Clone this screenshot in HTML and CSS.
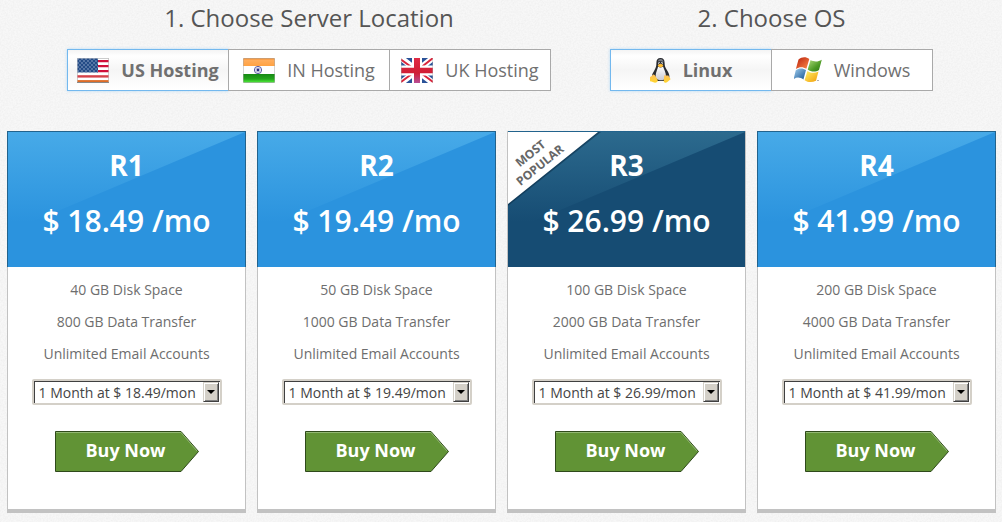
FILE: index.html
```html
<!DOCTYPE html>
<html lang="en">
<head>
<meta charset="utf-8">
<meta name="viewport" content="width=device-width, initial-scale=1">
<title>Hosting Plans</title>
<link rel="stylesheet" href="styles.css">
</head>
<body>
<main>
  <div class="pickers">
    <section class="picker">
      <h2 class="picker-title">1. Choose Server Location</h2>
      <div class="options">
        <button type="button" class="option selected" aria-pressed="true">
          <svg class="icon" viewBox="0 0 32 25" aria-hidden="true">
            <defs>
              <pattern id="stars" width="4" height="4" patternUnits="userSpaceOnUse"><rect width="4" height="4" fill="#234b86"/><circle cx="1" cy="1" r=".65" fill="#b4c6e0"/><circle cx="3" cy="3" r=".65" fill="#b4c6e0"/></pattern>
            </defs>
            <rect width="32" height="25" rx="1" fill="#999"/>
            <rect x="0.5" y="0.5" width="31" height="24" fill="#fff"/>
            <path d="M20 3.200h11.500M20 8.200h11.500M20 13.200h11.500" stroke="#d0103a" stroke-width="2.200"/>
            <path d="M.5 18.400h31" stroke="#d5424a" stroke-width="2.400"/>
            <path d="M.5 23.200h31" stroke="#dd6c28" stroke-width="2.200"/>
            <rect x="0.5" y="0.5" width="20.500" height="14" fill="url(#stars)"/>
            <path d="M0 24.500h32" stroke="#888" stroke-width="1"/>
          </svg>
          <span>US Hosting</span>
        </button>
        <button type="button" class="option" aria-pressed="false">
          <svg class="icon" viewBox="0 0 32 25" aria-hidden="true">
            <defs>
              <linearGradient id="saffron" x2="0" y2="1"><stop stop-color="#f58f31"/><stop offset=".25" stop-color="#ffad5c"/><stop offset="1" stop-color="#ffa243"/></linearGradient>
              <linearGradient id="green" x2="0" y2="1"><stop stop-color="#168a14"/><stop offset=".6" stop-color="#25a51d"/><stop offset="1" stop-color="#4bea37"/></linearGradient>
            </defs>
            <rect width="32" height="25" rx="1" fill="#aaa"/>
            <rect x="0.5" y="8" width="31" height="8" fill="#fff"/>
            <rect x="0.5" y="0.5" width="31" height="7.500" fill="url(#saffron)"/>
            <rect x="0.5" y="16" width="31" height="8.300" fill="url(#green)"/>
            <circle cx="15" cy="12" r="3.600" fill="#fff" stroke="#3c3c90" stroke-width=".9"/>
            <path d="M15 8.500v7M11.500 12h7M12.500 9.500l5 5M17.500 9.500l-5 5" stroke="#8c8cc4" stroke-width=".5"/>
            <circle cx="15" cy="12" r="1.400" fill="#292983"/>
          </svg>
          <span>IN Hosting</span>
        </button>
        <button type="button" class="option" aria-pressed="false">
          <svg class="icon" viewBox="0 0 32 25" aria-hidden="true">
            <defs><linearGradient id="cross" x2="0" y2="1"><stop stop-color="#df2a45"/><stop offset=".6" stop-color="#d01e35"/><stop offset="1" stop-color="#b84e96"/></linearGradient></defs>
            <rect width="32" height="25" rx="1" fill="#2a5298"/>
            <path d="M0 0l32 25M32 0L0 25" stroke="#fff" stroke-width="6"/>
            <path d="M0 1.500l11 8M32 0L20 9.500M0 24l12-9M20 15l12 9" stroke="#d9253c" stroke-width="2"/>
            <path d="M16 0v25M0 12.500h32" stroke="#fff" stroke-width="10"/>
            <path d="M13 0h6v9.800h13v5.400H19V25h-6v-9.800H0V9.800h13z" fill="url(#cross)"/>
            <path d="M0 0v25M32 0v25" stroke="#aaa" stroke-width=".8"/>
          </svg>
          <span>UK Hosting</span>
        </button>
      </div>
    </section>
    <section class="picker">
      <h2 class="picker-title">2. Choose OS</h2>
      <div class="options">
        <button type="button" class="option selected" aria-pressed="true">
          <svg class="icon icon-linux" viewBox="2 0 23 25" preserveAspectRatio="none" aria-hidden="true">
            <defs>
              <linearGradient id="belly" x2="0" y2="1"><stop stop-color="#fff"/><stop offset="1" stop-color="#c9c9d2"/></linearGradient>
              <linearGradient id="foot" x2="0" y2="1"><stop stop-color="#ffbf5e"/><stop offset="1" stop-color="#ffd52b"/></linearGradient>
            </defs>
            <path d="M9 5C9 1.500 10.500 0 13.500 0s4.500 1.700 4.500 5c0 3 .8 4.500 2.500 7 1.800 2.700 3.500 5 2.500 8.500L18 23H9l-5-4c0-3 1.700-4.500 3-7 1.500-2.600 2-4 2-7z" fill="#292b30"/>
            <path d="M10.500 3.500C11 1.600 12.500.8 14 1c1.500.2 2.500 1.300 2.700 3-2-1-4-.8-6.200-.5z" fill="#777b82"/>
            <path d="M10.800 8.500c1.800 1.500 3.900 1.200 5.500 0 .7 2.500 3.500 6 3.200 10.500-1.500 4-7.500 4.500-11 1-1-5 1.800-8 2.300-11.500z" fill="url(#belly)"/>
            <ellipse cx="12" cy="5.300" rx="1" ry="1.200" fill="#ccc"/><ellipse cx="15" cy="5.300" rx="1.100" ry="1.300" fill="#ccc"/>
            <circle cx="12.300" cy="5.500" r=".5"/><circle cx="14.800" cy="5.500" r=".5"/>
            <path d="M10.500 7.300c1.500-1.800 4.500-1.600 6-.1-.2 2-5 3.400-6 .1z" fill="#ffbc2e"/>
            <path d="M6 16.500c1.500.3 2.500 2.500 4 4.500.9 1.500.5 3.300-1.500 3.600-2 .3-4-1-6.500-1.300-1.500-.4-.7-2-.8-3.300 0-1.500 2-1 3-2.300.4-.6.900-1.300 1.800-1.200z" fill="url(#foot)"/>
            <path d="M18 17c1.500.8 3 .3 4.200.5.300 1.500 2 2.300 2.300 3.700-1.500 1-3.500 3.300-5.300 3.500-2 0-2.600-1.500-2-3.500.3-1.500 0-2.700.8-4.200z" fill="url(#foot)"/>
          </svg>
          <span>Linux</span>
        </button>
        <button type="button" class="option" aria-pressed="false">
          <svg class="icon icon-windows" viewBox="0 0 28 26" aria-hidden="true">
            <defs>
              <linearGradient id="wr" x2="1" y2="1"><stop stop-color="#b81f0c"/><stop offset="1" stop-color="#ff8b49"/></linearGradient>
              <linearGradient id="wg" x2="1" y2="1"><stop stop-color="#b1dc7c"/><stop offset=".6" stop-color="#4c9a24"/><stop offset="1" stop-color="#2b7513"/></linearGradient>
              <linearGradient id="wb" x2="1" y2="1"><stop stop-color="#a3d0ef"/><stop offset="1" stop-color="#175494"/></linearGradient>
              <linearGradient id="wy" x2="1" y2="1"><stop stop-color="#fff26b"/><stop offset="1" stop-color="#f29d08"/></linearGradient>
            </defs>
            <path d="M4.500 2.500C8-.5 12-.5 15.300 2L12.400 11.800C9 9.600 5.500 9.500 1.900 12z" fill="url(#wr)"/>
            <path d="M16.600 3C20 5 24 5 27.800 2.700L25 13c-3.500 2.300-8 2-11.300-.6z" fill="url(#wg)"/>
            <path d="M1.700 13.400c3.300-2.600 7-2.600 10.300-.4L9.400 22.500C6 20 2.500 19.800-.4 22.300z" fill="url(#wb)"/>
            <path d="M13.400 14c3.400 2.300 7.500 2.500 11.100.4L22 23.700c-4 2-8 1.800-11.400-.5z" fill="url(#wy)"/>
            <circle cx="24" cy="23.500" r=".6" fill="#555"/>
          </svg>
          <span>Windows</span>
        </button>
      </div>
    </section>
  </div>

  <div class="plans">
    <article class="plan">
      <header class="plan-head"><h3 class="plan-name">R1</h3><p class="plan-price">$ 18.49 /mo</p></header>
      <ul class="features"><li>40 GB Disk Space</li><li>800 GB Data Transfer</li><li>Unlimited Email Accounts</li></ul>
      <div class="term"><select aria-label="R1 billing term"><option>1 Month at $ 18.49/mon</option></select><span class="term-arrow"></span></div>
      <button type="button" class="buy"><svg class="buy-shape" viewBox="0 0 144 41" aria-hidden="true"><path class="buy-fill" d="M.5.5H126L143.500 20.500 126 40.500H.5z"/><path class="buy-shine" d="M1 1.500H126L142 20"/></svg><span class="buy-label">Buy Now</span></button>
    </article>
    <article class="plan">
      <header class="plan-head"><h3 class="plan-name">R2</h3><p class="plan-price">$ 19.49 /mo</p></header>
      <ul class="features"><li>50 GB Disk Space</li><li>1000 GB Data Transfer</li><li>Unlimited Email Accounts</li></ul>
      <div class="term"><select aria-label="R2 billing term"><option>1 Month at $ 19.49/mon</option></select><span class="term-arrow"></span></div>
      <button type="button" class="buy"><svg class="buy-shape" viewBox="0 0 144 41" aria-hidden="true"><path class="buy-fill" d="M.5.5H126L143.500 20.500 126 40.500H.5z"/><path class="buy-shine" d="M1 1.500H126L142 20"/></svg><span class="buy-label">Buy Now</span></button>
    </article>
    <article class="plan popular">
      <header class="plan-head"><h3 class="plan-name">R3</h3><p class="plan-price">$ 26.99 /mo</p>
        <div class="ribbon">
          <svg class="ribbon-shape" viewBox="0 0 94 76" aria-hidden="true"><path d="M0 0H93L0 74z" fill="#0d3552" opacity=".6"/><path d="M0 0H91L0 73z" fill="#0d3552" opacity=".7"/><path d="M0 0H90L0 72z" fill="#fff"/></svg>
          <span class="ribbon-text">MOST<br>POPULAR</span>
        </div>
      </header>
      <ul class="features"><li>100 GB Disk Space</li><li>2000 GB Data Transfer</li><li>Unlimited Email Accounts</li></ul>
      <div class="term"><select aria-label="R3 billing term"><option>1 Month at $ 26.99/mon</option></select><span class="term-arrow"></span></div>
      <button type="button" class="buy"><svg class="buy-shape" viewBox="0 0 144 41" aria-hidden="true"><path class="buy-fill" d="M.5.5H126L143.500 20.500 126 40.500H.5z"/><path class="buy-shine" d="M1 1.500H126L142 20"/></svg><span class="buy-label">Buy Now</span></button>
    </article>
    <article class="plan">
      <header class="plan-head"><h3 class="plan-name">R4</h3><p class="plan-price">$ 41.99 /mo</p></header>
      <ul class="features"><li>200 GB Disk Space</li><li>4000 GB Data Transfer</li><li>Unlimited Email Accounts</li></ul>
      <div class="term"><select aria-label="R4 billing term"><option>1 Month at $ 41.99/mon</option></select><span class="term-arrow"></span></div>
      <button type="button" class="buy"><svg class="buy-shape" viewBox="0 0 144 41" aria-hidden="true"><path class="buy-fill" d="M.5.5H126L143.500 20.500 126 40.500H.5z"/><path class="buy-shine" d="M1 1.500H126L142 20"/></svg><span class="buy-label">Buy Now</span></button>
    </article>
  </div>
</main>
</body>
</html>
```

FILE: styles.css
```css
* { box-sizing: border-box; }

body {
  margin: 0;
  font-family: "Open Sans", "Noto Sans", sans-serif;
  color: #6e6e6e;
  background-color: #f7f7f7;
  background-image: url("data:image/svg+xml,%3Csvg xmlns='http://www.w3.org/2000/svg' width='200' height='200'%3E%3Cfilter id='n' x='0' y='0' width='1' height='1'%3E%3CfeTurbulence type='fractalNoise' baseFrequency='.6' numOctaves='2' stitchTiles='stitch'/%3E%3CfeColorMatrix values='0 0 0 0 .5 0 0 0 0 .5 0 0 0 0 .5 .25 0 0 0 -.09'/%3E%3C/filter%3E%3Crect width='200' height='200' filter='url(%23n)'/%3E%3C/svg%3E");
}

h2, h3, p, ul { margin: 0; padding: 0; }

button, select { font-family: inherit; }

/* Location and OS pickers */
.pickers {
  display: flex;
  justify-content: center;
  gap: 59px;
  padding: 2px 69px 40px 67px;
}

.picker-title {
  margin-bottom: 15px;
  font-size: 24px;
  font-weight: 400;
  line-height: 32px;
  text-align: center;
  color: #555;
}

.options { display: flex; }

.option {
  display: flex;
  align-items: center;
  justify-content: center;
  gap: 12px;
  width: 162px;
  height: 42px;
  padding: 0;
  border: 1px solid #a9a9a9;
  background: #fff;
  color: #707070;
  font-size: 18px;
  line-height: 24px;
  white-space: nowrap;
}

.option + .option { margin-left: -1px; }

.option.selected {
  border-color: #73b8ee;
  background: linear-gradient(#f4f4f4, #fff 15%, #f5f5f5 50%, #fff);
  box-shadow: 0 0 3px #b5d9f5;
  font-weight: 700;
}

.icon { width: 32px; height: 25px; flex: none; }
.icon-linux { width: 21px; }
.icon-windows { width: 28px; height: 26px; }

/* Plan cards */
.plans {
  display: grid;
  grid-template-columns: repeat(4, 1fr);
  gap: 11px;
  padding: 0 6px 9px 7px;
}

.plan {
  display: flex;
  flex-direction: column;
  align-items: center;
  padding-bottom: 37px;
  border: solid #c2c2c2;
  border-width: 0 1px 4px;
  background: #fff;
}

.plan-head {
  position: relative;
  align-self: stretch;
  height: 136px;
  margin: 0 -1px;
  padding-top: 15px;
  border: 1px solid #22638d;
  border-bottom: 0;
  background: #2b93de;
  color: #fff;
  text-align: center;
}

.plan-head::before {
  content: "";
  position: absolute;
  inset: 0 0 auto;
  height: 100px;
  background: linear-gradient(#47aae8, #2b93de 90%);
  clip-path: polygon(0 0, 100% 0, 0 100%);
}

.popular .plan-head {
  margin: 0;
  border-width: 1px 0 0;
  background: #164c73;
}

.popular .plan-head::before { background: linear-gradient(#2c6a8e, #164c73 90%); }

.plan-name {
  position: relative;
  font-size: 28px;
  font-weight: 700;
  line-height: 36px;
}

.plan-price {
  position: relative;
  margin-top: 18px;
  font-size: 30px;
  font-weight: 600;
  line-height: 40px;
}

.ribbon { position: absolute; top: 0; left: 0; width: 94px; height: 76px; }
.ribbon-shape { display: block; width: 100%; height: 100%; }

.ribbon-text {
  position: absolute;
  top: 12px;
  left: -9px;
  width: 72px;
  color: #666;
  font-size: 12px;
  font-weight: 700;
  line-height: 15px;
  transform: rotate(-39deg);
}

.features {
  padding-top: 7px;
  list-style: none;
  font-size: 14px;
  line-height: 32px;
  text-align: center;
}

.term {
  position: relative;
  margin-top: 9px;
}

.term select {
  display: block;
  width: 190px;
  height: 26px;
  padding: 0 22px 0 5px;
  border: 2px solid #d4d0c8;
  border-radius: 2px;
  appearance: none;
  background: #fff;
  box-shadow: inset 1px 1px #404040;
  color: #444;
  font-size: 14px;
}

.term-arrow {
  position: absolute;
  top: 3px;
  right: 3px;
  width: 16px;
  height: 20px;
  border: 1px solid;
  border-color: #d4d0c8 #404040 #404040 #d4d0c8;
  background: #d4d0c8;
  box-shadow: inset 1px 1px #fff, inset -1px -1px #808080;
  pointer-events: none;
}

.term-arrow::after {
  content: "";
  position: absolute;
  top: 7px;
  left: 3px;
  border: solid transparent;
  border-width: 4px 4px 0;
  border-top-color: #000;
}

.buy {
  position: relative;
  width: 144px;
  height: 41px;
  margin-top: 26px;
  padding: 0 2px 3px 0;
  border: 0;
  background: none;
  color: #fff;
  font-size: 18px;
  font-weight: 700;
  line-height: 24px;
}

.buy-shape { position: absolute; inset: 0; width: 100%; height: 100%; }
.buy-fill { fill: #619335; stroke: #2f4a1b; }
.buy-shine { fill: none; stroke: #93b873; }
.buy-label { position: relative; }
```
